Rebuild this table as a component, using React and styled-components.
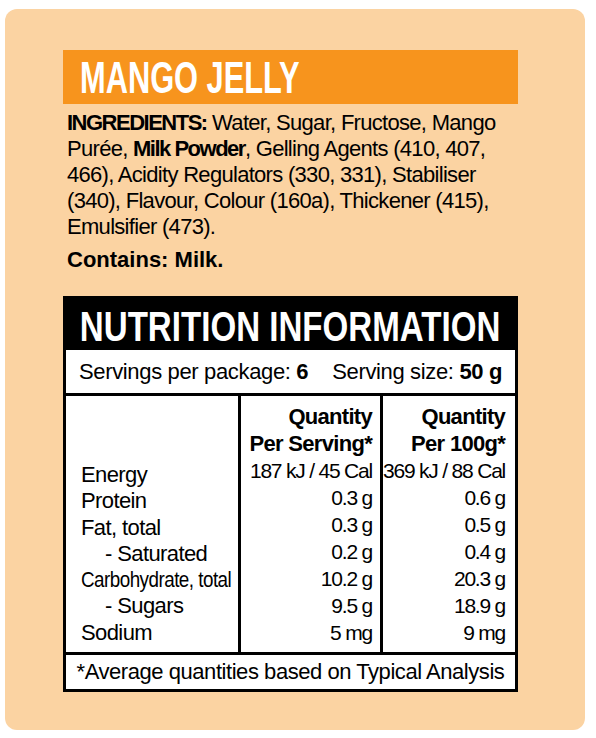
import React from "react";
import styled, { createGlobalStyle } from "styled-components";

const GlobalStyle = createGlobalStyle`
  html, body {
    margin: 0;
    padding: 0;
    background: #ffffff;
  }
  body {
    font-family: "Liberation Sans", Arial, sans-serif;
    color: #000;
  }
`;

// condensed display type: squeeze a run of text horizontally
const Narrow = styled.span`
  display: inline-block;
  white-space: nowrap;
  transform: scaleX(${(p) => p.$x});
  transform-origin: ${(p) => p.$origin || "left"} center;
`;

const Card = styled.div`
  box-sizing: border-box;
  width: 580px;
  height: 721px;
  margin: 9px 0 0 5px;
  padding: 41px 67px 0 58px;
  background: #fbd3a2;
  border-radius: 12px;
`;

const TitleBar = styled.h1`
  margin: 0;
  height: 54px;
  padding-left: 17px;
  background: #f7941d;
  color: #fff;
  font-size: 44px;
  font-weight: 700;
  line-height: 56px;
  white-space: nowrap;
`;

const Ingredients = styled.p`
  margin: 6px 0 0 4px;
  font-size: 22px;
  line-height: 26px;
  letter-spacing: -0.7px;
  white-space: nowrap;

  & b {
    letter-spacing: -1.5px;
  }
`;

const Contains = styled.p`
  margin: 7px 0 0 4px;
  font-size: 22px;
  line-height: 26px;
  font-weight: 700;
`;

const Panel = styled.section`
  margin-top: 23px;
  border: 3px solid #000;
  background: #fff;
`;

const PanelHead = styled.h2`
  display: flex;
  justify-content: center;
  margin: 0;
  height: 51px;
  background: #000;
  color: #fff;
  font-size: 43px;
  font-weight: 700;
  line-height: 54px;
`;

const Servings = styled.div`
  display: flex;
  justify-content: center;
  align-items: center;
  gap: 24px;
  height: 43px;
  border-bottom: 3px solid #000;
  font-size: 22px;
  letter-spacing: -0.35px;
`;

const Body = styled.div`
  display: grid;
  grid-template-columns: 172px 142px 1fr;
  height: 256px;
  border-bottom: 3px solid #000;
`;

const LabelColumn = styled.div`
  display: flex;
  flex-direction: column;
  justify-content: flex-end;
  padding: 0 0 6px 15px;
  font-size: 22px;
  line-height: 26.3px;
  letter-spacing: -0.6px;
`;

const ValueColumn = styled.div`
  display: flex;
  flex-direction: column;
  padding: 7px ${(p) => p.$pad}px 6px 0;
  border-left: 3px solid #000;
  text-align: right;
  font-size: 21px;
  line-height: 27px;
  letter-spacing: -1.2px;
`;

const Head = styled.div`
  font-size: 22px;
  font-weight: 700;
  letter-spacing: -0.7px;
`;

const Line = styled.div`
  white-space: nowrap;
  padding-left: ${(p) => (p.$indent ? "24px" : "0")};
`;

const Footer = styled.div`
  height: 34px;
  text-align: center;
  font-size: 22px;
  line-height: 34px;
  letter-spacing: -0.45px;
  white-space: nowrap;
`;

const rows = [
  { label: "Energy", serving: "187 kJ / 45 Cal", per100: "369 kJ / 88 Cal" },
  { label: "Protein", serving: "0.3 g", per100: "0.6 g" },
  { label: "Fat, total", serving: "0.3 g", per100: "0.5 g" },
  { label: "- Saturated", serving: "0.2 g", per100: "0.4 g", indent: true },
  { label: "Carbohydrate, total", serving: "10.2 g", per100: "20.3 g", squeeze: 0.855 },
  { label: "- Sugars", serving: "9.5 g", per100: "18.9 g", indent: true },
  { label: "Sodium", serving: "5 mg", per100: "9 mg" },
];

export default function App() {
  return (
    <>
      <GlobalStyle />
      <Card>
        <TitleBar>
          <Narrow $x={0.7}>MANGO JELLY</Narrow>
        </TitleBar>
        <Ingredients>
          <b>INGREDIENTS:</b> Water, Sugar, Fructose, Mango
          <br />
          Purée, <b>Milk Powder</b>, Gelling Agents (410, 407,
          <br />
          466), Acidity Regulators (330, 331), Stabiliser
          <br />
          (340), Flavour, Colour (160a), Thickener (415),
          <br />
          Emulsifier (473).
        </Ingredients>
        <Contains>Contains: Milk.</Contains>

        <Panel>
          <PanelHead>
            <Narrow $x={0.77} $origin="center">
              NUTRITION INFORMATION
            </Narrow>
          </PanelHead>
          <Servings>
            <span>
              Servings per package: <b>6</b>
            </span>
            <span>
              Serving size: <b>50 g</b>
            </span>
          </Servings>
          <Body>
            <LabelColumn>
              {rows.map((r) => (
                <Line key={r.label} $indent={r.indent}>
                  {r.squeeze ? <Narrow $x={r.squeeze}>{r.label}</Narrow> : r.label}
                </Line>
              ))}
            </LabelColumn>
            <ValueColumn $pad={8}>
              <Head>Quantity</Head>
              <Head>Per Serving*</Head>
              {rows.map((r) => (
                <Line key={r.label}>{r.serving}</Line>
              ))}
            </ValueColumn>
            <ValueColumn $pad={10}>
              <Head>Quantity</Head>
              <Head>Per 100g*</Head>
              {rows.map((r) => (
                <Line key={r.label}>{r.per100}</Line>
              ))}
            </ValueColumn>
          </Body>
          <Footer>*Average quantities based on Typical Analysis</Footer>
        </Panel>
      </Card>
    </>
  );
}
